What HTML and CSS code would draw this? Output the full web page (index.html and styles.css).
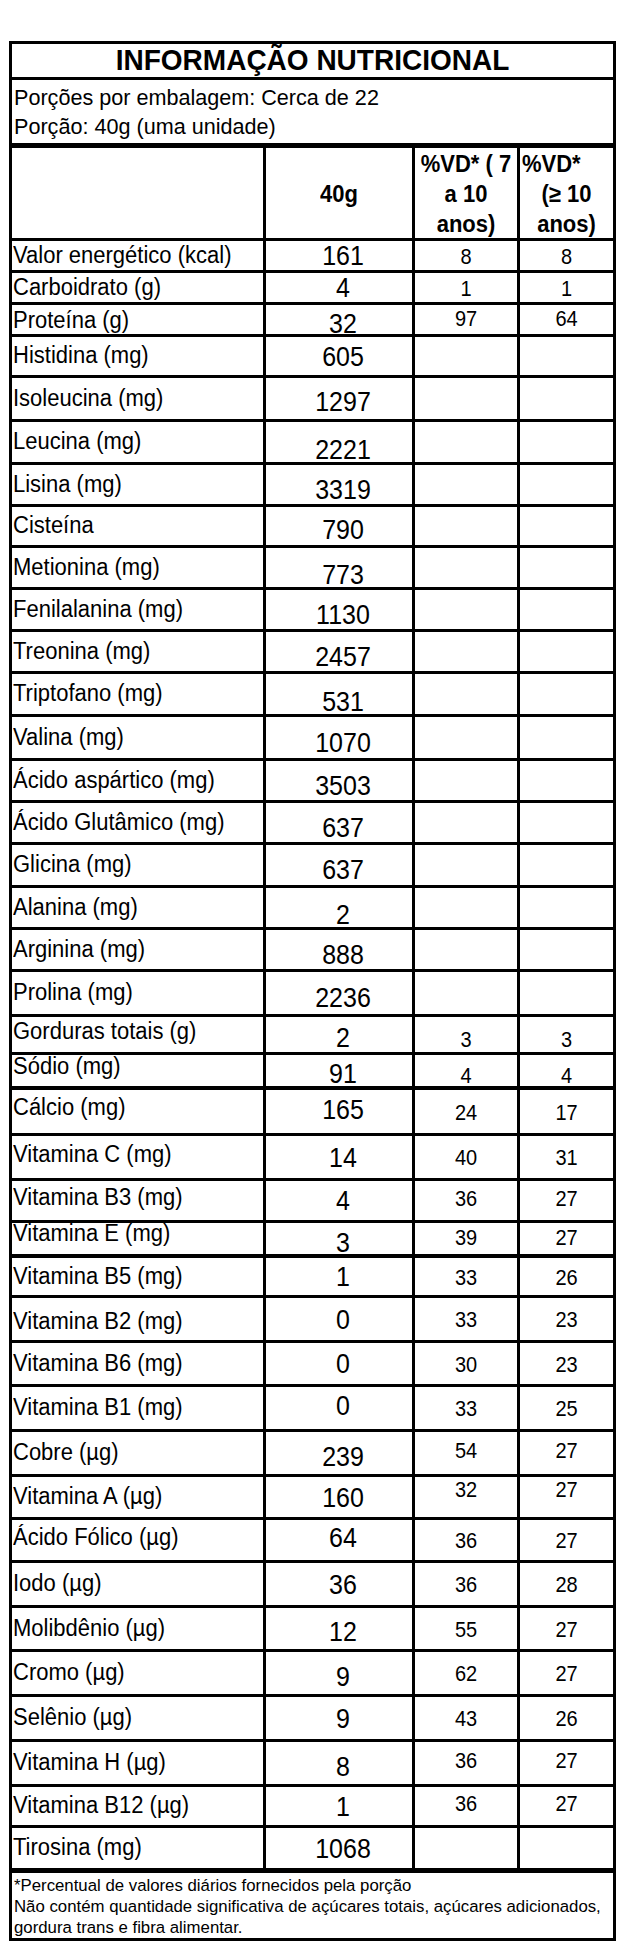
FILE: index.html
```html
<!DOCTYPE html>
<html lang="pt-BR">
<head>
<meta charset="utf-8">
<title>Informação Nutricional</title>
<link rel="stylesheet" href="styles.css">
</head>
<body>
<div class="label">
  <div class="title"><span>INFORMAÇÃO NUTRICIONAL</span></div>
  <div class="info">
    <p>Porções por embalagem: Cerca de 22</p>
    <p>Porção: 40g (uma unidade)</p>
  </div>
  <div class="row head">
    <div class="hc"></div>
    <div class="hc"><span>40g</span></div>
    <div class="hc"><span>%VD* ( 7</span><span>a 10</span><span>anos)</span></div>
    <div class="hc"><span class="left">%VD*</span><span>(≥ 10</span><span>anos)</span></div>
  </div>
  <div class="row h32"><div class="lbl"><span>Valor energético (kcal)</span></div><div class="val"><span>161</span></div><div class="pct"><span>8</span></div><div class="pct"><span>8</span></div></div>
  <div class="row h32"><div class="lbl"><span>Carboidrato (g)</span></div><div class="val"><span>4</span></div><div class="pct"><span>1</span></div><div class="pct"><span>1</span></div></div>
  <div class="row h32"><div class="lbl"><span>Proteína (g)</span></div><div class="val s1"><span>32</span></div><div class="pct pu"><span>97</span></div><div class="pct pu"><span>64</span></div></div>
  <div class="row h41"><div class="lbl"><span>Histidina (mg)</span></div><div class="val"><span>605</span></div><div class="pct"></div><div class="pct"></div></div>
  <div class="row h44"><div class="lbl"><span>Isoleucina (mg)</span></div><div class="val s1"><span>1297</span></div><div class="pct"></div><div class="pct"></div></div>
  <div class="row h43"><div class="lbl"><span>Leucina (mg)</span></div><div class="val s3"><span>2221</span></div><div class="pct"></div><div class="pct"></div></div>
  <div class="row h42"><div class="lbl"><span>Lisina (mg)</span></div><div class="val s2"><span>3319</span></div><div class="pct"></div><div class="pct"></div></div>
  <div class="row h41"><div class="lbl"><span>Cisteína</span></div><div class="val s1"><span>790</span></div><div class="pct"></div><div class="pct"></div></div>
  <div class="row h42"><div class="lbl"><span>Metionina (mg)</span></div><div class="val s3"><span>773</span></div><div class="pct"></div><div class="pct"></div></div>
  <div class="row h42"><div class="lbl"><span>Fenilalanina (mg)</span></div><div class="val s2"><span>1130</span></div><div class="pct"></div><div class="pct"></div></div>
  <div class="row h42"><div class="lbl"><span>Treonina (mg)</span></div><div class="val s2"><span>2457</span></div><div class="pct"></div><div class="pct"></div></div>
  <div class="row h43"><div class="lbl"><span>Triptofano (mg)</span></div><div class="val s3"><span>531</span></div><div class="pct"></div><div class="pct"></div></div>
  <div class="row h44"><div class="lbl"><span>Valina (mg)</span></div><div class="val s2"><span>1070</span></div><div class="pct"></div><div class="pct"></div></div>
  <div class="row h42"><div class="lbl"><span>Ácido aspártico (mg)</span></div><div class="val s2"><span>3503</span></div><div class="pct"></div><div class="pct"></div></div>
  <div class="row h42"><div class="lbl"><span>Ácido Glutâmico (mg)</span></div><div class="val s2"><span>637</span></div><div class="pct"></div><div class="pct"></div></div>
  <div class="row h43"><div class="lbl"><span>Glicina (mg)</span></div><div class="val s2"><span>637</span></div><div class="pct"></div><div class="pct"></div></div>
  <div class="row h42"><div class="lbl"><span>Alanina (mg)</span></div><div class="val s3"><span>2</span></div><div class="pct"></div><div class="pct"></div></div>
  <div class="row h42"><div class="lbl"><span>Arginina (mg)</span></div><div class="val s2"><span>888</span></div><div class="pct"></div><div class="pct"></div></div>
  <div class="row h45"><div class="lbl"><span>Prolina (mg)</span></div><div class="val s2"><span>2236</span></div><div class="pct"></div><div class="pct"></div></div>
  <div class="row h38"><div class="lbl lu2"><span>Gorduras totais (g)</span></div><div class="val s1"><span>2</span></div><div class="pct pd"><span>3</span></div><div class="pct pd"><span>3</span></div></div>
  <div class="row h35 b4"><div class="lbl lu3"><span>Sódio (mg)</span></div><div class="val s1"><span>91</span></div><div class="pct pd"><span>4</span></div><div class="pct pd"><span>4</span></div></div>
  <div class="row h46"><div class="lbl lu"><span>Cálcio (mg)</span></div><div class="val u2"><span>165</span></div><div class="pct"><span>24</span></div><div class="pct"><span>17</span></div></div>
  <div class="row h45"><div class="lbl lu2"><span>Vitamina C (mg)</span></div><div class="val"><span>14</span></div><div class="pct"><span>40</span></div><div class="pct"><span>31</span></div></div>
  <div class="row h42"><div class="lbl lu2"><span>Vitamina B3 (mg)</span></div><div class="val"><span>4</span></div><div class="pct pu"><span>36</span></div><div class="pct pu"><span>27</span></div></div>
  <div class="row h35 b4"><div class="lbl lu4"><span>Vitamina E (mg)</span></div><div class="val s1"><span>3</span></div><div class="pct pu"><span>39</span></div><div class="pct pu"><span>27</span></div></div>
  <div class="row h40"><div class="lbl"><span>Vitamina B5 (mg)</span></div><div class="val"><span>1</span></div><div class="pct"><span>33</span></div><div class="pct"><span>26</span></div></div>
  <div class="row h45"><div class="lbl ld"><span>Vitamina B2 (mg)</span></div><div class="val"><span>0</span></div><div class="pct"><span>33</span></div><div class="pct"><span>23</span></div></div>
  <div class="row h44"><div class="lbl"><span>Vitamina B6 (mg)</span></div><div class="val"><span>0</span></div><div class="pct"><span>30</span></div><div class="pct"><span>23</span></div></div>
  <div class="row h45"><div class="lbl"><span>Vitamina B1 (mg)</span></div><div class="val u2"><span>0</span></div><div class="pct"><span>33</span></div><div class="pct"><span>25</span></div></div>
  <div class="row h45"><div class="lbl"><span>Cobre (µg)</span></div><div class="val s1"><span>239</span></div><div class="pct pu"><span>54</span></div><div class="pct pu"><span>27</span></div></div>
  <div class="row h43"><div class="lbl"><span>Vitamina A (µg)</span></div><div class="val"><span>160</span></div><div class="pct pu2"><span>32</span></div><div class="pct pu2"><span>27</span></div></div>
  <div class="row h43"><div class="lbl lu2"><span>Ácido Fólico (µg)</span></div><div class="val u2"><span>64</span></div><div class="pct"><span>36</span></div><div class="pct"><span>27</span></div></div>
  <div class="row h45"><div class="lbl"><span>Iodo (µg)</span></div><div class="val"><span>36</span></div><div class="pct"><span>36</span></div><div class="pct"><span>28</span></div></div>
  <div class="row h44"><div class="lbl"><span>Molibdênio (µg)</span></div><div class="val s1"><span>12</span></div><div class="pct"><span>55</span></div><div class="pct"><span>27</span></div></div>
  <div class="row h45"><div class="lbl"><span>Cromo (µg)</span></div><div class="val s1"><span>9</span></div><div class="pct"><span>62</span></div><div class="pct"><span>27</span></div></div>
  <div class="row h45"><div class="lbl"><span>Selênio (µg)</span></div><div class="val"><span>9</span></div><div class="pct"><span>43</span></div><div class="pct"><span>26</span></div></div>
  <div class="row h45"><div class="lbl"><span>Vitamina H (µg)</span></div><div class="val s1"><span>8</span></div><div class="pct pu"><span>36</span></div><div class="pct pu"><span>27</span></div></div>
  <div class="row h41"><div class="lbl"><span>Vitamina B12 (µg)</span></div><div class="val"><span>1</span></div><div class="pct pu"><span>36</span></div><div class="pct pu"><span>27</span></div></div>
  <div class="row h45 thick"><div class="lbl"><span>Tirosina (mg)</span></div><div class="val"><span>1068</span></div><div class="pct"></div><div class="pct"></div></div>
  <div class="footer">
    *Percentual de valores diários fornecidos pela porção<br>
    Não contém quantidade significativa de açúcares totais, açúcares adicionados,<br>
    gordura trans e fibra alimentar.
  </div>
</div>
</body>
</html>
```
FILE: styles.css
```css
* {
  box-sizing: border-box;
}

body {
  margin: 0;
  background: #fff;
  color: #000;
  font-family: "Liberation Sans", Arial, sans-serif;
}

.label {
  width: 607px;
  margin: 41px 0 0 9px;
  border: 3px solid #000;
}

.title {
  height: 36px;
  border-bottom: 3px solid #000;
  text-align: center;
  font-weight: bold;
  font-size: 28px;
  line-height: 33px;
}

.title span {
  display: inline-block;
  transform: scaleY(1.05);
}

.info {
  height: 68px;
  border-bottom: 5px solid #000;
  padding: 3px 0 0 2px;
  font-size: 21.6px;
  line-height: 29px;
}

.info p {
  margin: 0;
}

.row {
  display: grid;
  grid-template-columns: 254px 149px 105px 1fr;
  border-bottom: 3px solid #000;
}

.row > div {
  display: flex;
  align-items: center;
  border-right: 3px solid #000;
  line-height: 1;
  white-space: nowrap;
}

.row > div:last-child {
  border-right: none;
}

.row.b4 {
  border-bottom-width: 4px;
}

.row.thick {
  border-bottom-width: 5px;
}

.h32 { height: 32px; }
.h35 { height: 35px; }
.h38 { height: 38px; }
.h40 { height: 40px; }
.h41 { height: 41px; }
.h42 { height: 42px; }
.h43 { height: 43px; }
.h44 { height: 44px; }
.h45 { height: 45px; }
.h46 { height: 46px; }

.head {
  height: 93px;
}

.head .hc {
  flex-direction: column;
  justify-content: center;
  align-items: center;
  padding-top: 1px;
  font-weight: bold;
  font-size: 22px;
  line-height: 30px;
}

.head .hc span {
  display: block;
  transform: scaleY(1.08);
}

.head .hc .left {
  align-self: flex-start;
  padding-left: 2px;
}

.lbl span,
.val span,
.pct span {
  display: inline-block;
}

.lbl {
  padding-left: 1px;
  font-size: 22px;
}

.lbl span {
  transform: scaleY(1.06);
}

.lbl.lu { padding-bottom: 8px; }
.lbl.lu2 { padding-bottom: 5px; }
.lbl.lu3 { padding-bottom: 7px; }
.lbl.lu4 { padding-bottom: 11px; }
.lbl.ld { padding-top: 5px; }

.val {
  justify-content: center;
  padding-left: 8px;
  font-size: 25px;
}

.val span {
  transform: scaleY(1.1);
}

.val.s1 { padding-top: 6px; }
.val.s2 { padding-top: 9px; }
.val.s3 { padding-top: 14px; }
.val.u2 { padding-bottom: 5px; }

.pct {
  justify-content: center;
  font-size: 20px;
}

.pct span {
  transform: scaleY(1.14);
}

.pct.pd { padding-top: 8px; }
.pct.pu { padding-bottom: 6px; }
.pct.pu2 { padding-bottom: 16px; }

.footer {
  height: 65px;
  padding: 2px 0 0 2px;
  font-size: 16.8px;
  line-height: 21px;
  white-space: nowrap;
}
```
